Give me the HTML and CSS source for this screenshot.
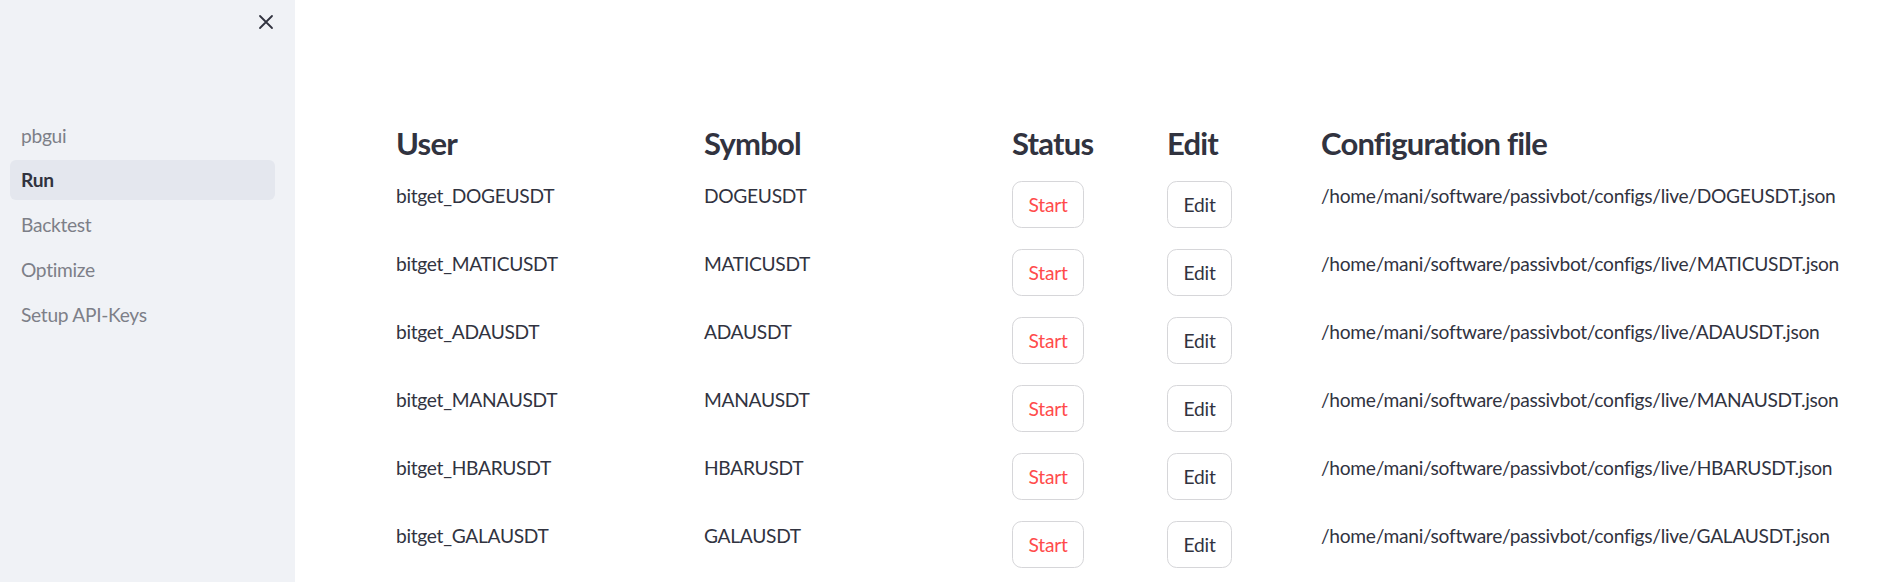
FILE: index.html
```html
<!DOCTYPE html>
<html lang="en">
<head>
<meta charset="utf-8">
<title>pbgui - Run</title>
<link rel="stylesheet" href="styles.css">
</head>
<body>
<div class="app">
  <aside class="sidebar">
    <div class="sidebar-top">
      <button class="close-btn" aria-label="Close sidebar">
        <svg width="16" height="16" viewBox="0 0 16 16"><path d="M2 2 L14 14 M14 2 L2 14" stroke="#31333f" stroke-width="1.8" stroke-linecap="round" fill="none"/></svg>
      </button>
    </div>
    <nav class="nav">
      <a class="nav-item">pbgui</a>
      <a class="nav-item active">Run</a>
      <a class="nav-item">Backtest</a>
      <a class="nav-item">Optimize</a>
      <a class="nav-item">Setup API-Keys</a>
    </nav>
  </aside>
  <main class="main">
    <div class="table">
      <div class="row head">
        <h3>User</h3><h3>Symbol</h3><h3>Status</h3><h3>Edit</h3><h3>Configuration file</h3>
      </div>
      <div class="row">
        <p>bitget_DOGEUSDT</p><p>DOGEUSDT</p>
        <div><button class="btn start">Start</button></div>
        <div><button class="btn">Edit</button></div>
        <p>/home/mani/software/passivbot/configs/live/DOGEUSDT.json</p>
      </div>
      <div class="row">
        <p>bitget_MATICUSDT</p><p>MATICUSDT</p>
        <div><button class="btn start">Start</button></div>
        <div><button class="btn">Edit</button></div>
        <p>/home/mani/software/passivbot/configs/live/MATICUSDT.json</p>
      </div>
      <div class="row">
        <p>bitget_ADAUSDT</p><p>ADAUSDT</p>
        <div><button class="btn start">Start</button></div>
        <div><button class="btn">Edit</button></div>
        <p>/home/mani/software/passivbot/configs/live/ADAUSDT.json</p>
      </div>
      <div class="row">
        <p>bitget_MANAUSDT</p><p>MANAUSDT</p>
        <div><button class="btn start">Start</button></div>
        <div><button class="btn">Edit</button></div>
        <p>/home/mani/software/passivbot/configs/live/MANAUSDT.json</p>
      </div>
      <div class="row">
        <p>bitget_HBARUSDT</p><p>HBARUSDT</p>
        <div><button class="btn start">Start</button></div>
        <div><button class="btn">Edit</button></div>
        <p>/home/mani/software/passivbot/configs/live/HBARUSDT.json</p>
      </div>
      <div class="row">
        <p>bitget_GALAUSDT</p><p>GALAUSDT</p>
        <div><button class="btn start">Start</button></div>
        <div><button class="btn">Edit</button></div>
        <p>/home/mani/software/passivbot/configs/live/GALAUSDT.json</p>
      </div>
    </div>
  </main>
</div>
</body>
</html>
```

FILE: styles.css
```css
* { box-sizing: border-box; }
html, body { margin: 0; padding: 0; height: 100%; }
body {
  font-family: Lato, "Liberation Sans", sans-serif;
  color: #31333f;
  background: #ffffff;
  overflow: hidden;
}
.app { display: flex; height: 100vh; }
.sidebar {
  width: 295px;
  flex: none;
  background: #f0f2f6;
  display: flex;
  flex-direction: column;
}
.sidebar-top {
  height: 115px;
  display: flex;
  justify-content: flex-end;
  align-items: flex-start;
  padding: 7px 14px 0 0;
}
.close-btn {
  width: 30px; height: 30px;
  border: none; background: transparent; padding: 0;
  display: flex; align-items: center; justify-content: center;
}
.nav { display: flex; flex-direction: column; gap: 4.8px; padding: 0 20px 0 10px; }
.nav-item {
  height: 40px;
  display: flex; align-items: center;
  padding-left: 11px;
  border-radius: 6px;
  font-size: 19.2px;
  letter-spacing: -0.3px;
  color: #7d7f88;
}
.nav-item.active { background: #e4e7ee; color: #31333f; font-weight: 700; }
.main { flex: 1; padding: 125px 0 0 101px; }
.row {
  display: grid;
  grid-template-columns: 308px 308px 155px 154px auto;
  align-items: start;
  height: 68px;
}
.row.head { height: 56px; }
h3 {
  margin: 0;
  font-size: 31px;
  line-height: 1.2;
  letter-spacing: -0.8px;
  font-weight: 700;
}
p { margin: 0; font-size: 19.2px; line-height: 1.6; letter-spacing: -0.3px; }
.btn {
  height: 47px;
  padding: 0 15.5px;
  border: 1px solid #d6d6d9;
  border-radius: 9.6px;
  background: #fff;
  font-family: inherit;
  font-size: 19.2px;
  letter-spacing: -0.2px;
  color: #31333f;
}
.btn.start { color: #ff4b4b; }
```
